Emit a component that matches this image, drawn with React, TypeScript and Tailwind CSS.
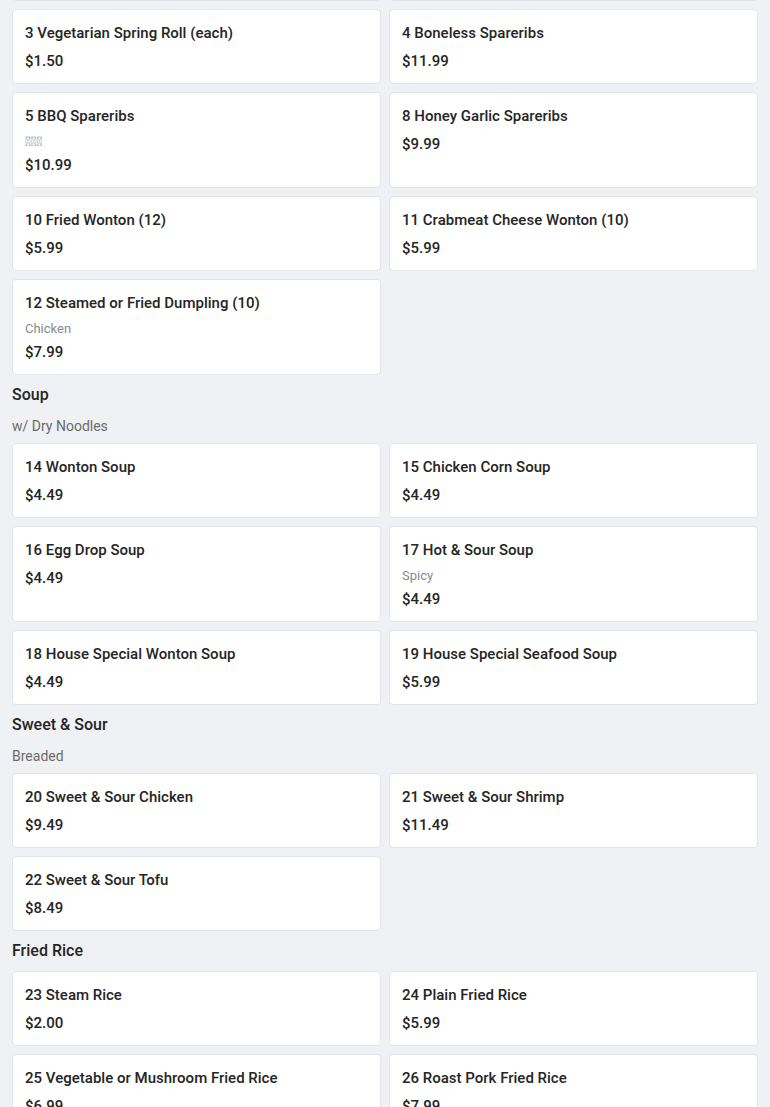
import React from "react";

type Item = { name: string; price: string; desc?: string };
type Section = { title: string; subtitle?: string; items: Item[] };

const sections: Section[] = [
  {
    title: "Appetizers",
    items: [
      { name: "1 Egg Roll (each)", price: "$1.50" },
      { name: "2 Shrimp Roll (each)", price: "$1.75" },
      { name: "3 Vegetarian Spring Roll (each)", price: "$1.50" },
      { name: "4 Boneless Spareribs", price: "$11.99" },
      { name: "5 BBQ Spareribs", price: "$10.99", desc: "\uE000\uE001\uE002" },
      { name: "8 Honey Garlic Spareribs", price: "$9.99" },
      { name: "10 Fried Wonton (12)", price: "$5.99" },
      { name: "11 Crabmeat Cheese Wonton (10)", price: "$5.99" },
      { name: "12 Steamed or Fried Dumpling (10)", price: "$7.99", desc: "Chicken" },
    ],
  },
  {
    title: "Soup",
    subtitle: "w/ Dry Noodles",
    items: [
      { name: "14 Wonton Soup", price: "$4.49" },
      { name: "15 Chicken Corn Soup", price: "$4.49" },
      { name: "16 Egg Drop Soup", price: "$4.49" },
      { name: "17 Hot & Sour Soup", price: "$4.49", desc: "Spicy" },
      { name: "18 House Special Wonton Soup", price: "$4.49" },
      { name: "19 House Special Seafood Soup", price: "$5.99" },
    ],
  },
  {
    title: "Sweet & Sour",
    subtitle: "Breaded",
    items: [
      { name: "20 Sweet & Sour Chicken", price: "$9.49" },
      { name: "21 Sweet & Sour Shrimp", price: "$11.49" },
      { name: "22 Sweet & Sour Tofu", price: "$8.49" },
    ],
  },
  {
    title: "Fried Rice",
    items: [
      { name: "23 Steam Rice", price: "$2.00" },
      { name: "24 Plain Fried Rice", price: "$5.99" },
      { name: "25 Vegetable or Mushroom Fried Rice", price: "$6.99" },
      { name: "26 Roast Pork Fried Rice", price: "$7.99" },
      { name: "27 Chicken Fried Rice", price: "$7.99" },
      { name: "28 Shrimp Fried Rice", price: "$8.99" },
    ],
  },
];

// regular-weight text (descriptions, subtitles)
const regular = "font-['Roboto',sans-serif] font-normal";

function MenuCard({ item }: { item: Item }) {
  return (
    <div className="rounded-[4px] border border-[#e2e4e8] bg-white px-3 pt-[13px] pb-3">
      <div className="text-[15px] leading-5 text-[#262626]">{item.name}</div>
      {item.desc && (
        <div className={`${regular} mt-[7px] text-[13px] leading-[18px] text-[#8a8a8a]`}>
          {item.desc}
        </div>
      )}
      <div className={`${item.desc ? "mt-1" : "mt-2"} text-[15px] leading-5 text-[#262626]`}>
        {item.price}
      </div>
    </div>
  );
}

export default function App() {
  return (
    <div
      className="h-screen overflow-hidden bg-[#f0f1f4]"
      style={{ fontFamily: "'Roboto Medium', Roboto, 'Noto Sans', sans-serif" }}
    >
      <div className="-mt-[114px] px-3">
        {sections.map((section) => (
          <section key={section.title}>
            <h2 className="pt-2 text-base leading-6 text-[#262626]">{section.title}</h2>
            {section.subtitle && (
              <p className={`${regular} mt-[9px] text-sm leading-5 text-[#6b6b6b]`}>
                {section.subtitle}
              </p>
            )}
            <div
              className={`${section.subtitle ? "mt-[7px]" : "mt-2"} grid grid-cols-2 gap-2`}
            >
              {section.items.map((item) => (
                <MenuCard key={item.name} item={item} />
              ))}
            </div>
          </section>
        ))}
      </div>
    </div>
  );
}
